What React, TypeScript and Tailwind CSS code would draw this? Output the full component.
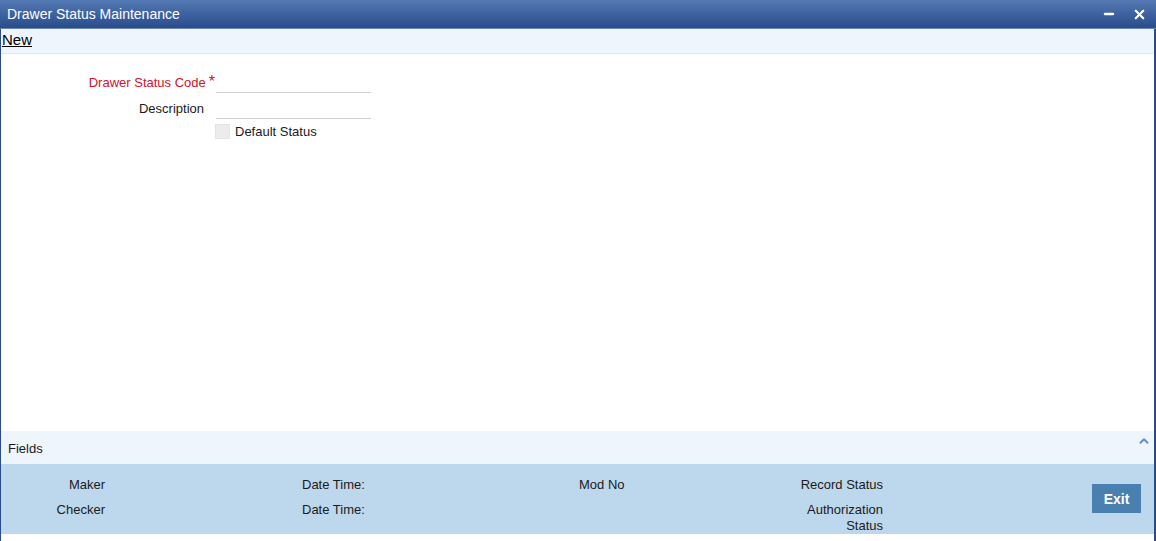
import { X, Minus, ChevronUp } from 'lucide-react';

const font = { fontFamily: '"Liberation Sans", Arial, sans-serif' };

export default function App() {
    return (
        <div className="w-[1156px] h-[541px] bg-white flex flex-col text-[13px] text-[#1a1a1a]" style={font}>
            {/* Title bar */}
            <div className="h-[29px] shrink-0 flex items-center justify-between pl-[7px] pr-[9px] bg-gradient-to-b from-[#5379b3] to-[#2a4c8c] border-b border-[#6a86ad]">
                <span className="text-white text-[14px] leading-none">Drawer Status Maintenance</span>
                <div className="flex items-center gap-[16px] text-white">
                    <Minus className="w-[14px] h-[14px]" strokeWidth={4} />
                    <X className="w-[15px] h-[15px]" strokeWidth={3.5} />
                </div>
            </div>

            <div className="flex-1 flex flex-col border-l border-[#2a4c8c] border-r-2 border-r-[#2a4c8c]">
                {/* Toolbar */}
                <div className="h-[25px] shrink-0 bg-[#eef5fd] border-b border-[#e2e6ea] flex items-center pl-[1px]">
                    <span className="underline text-[15px] text-black leading-none -mt-[3px]">New</span>
                </div>

                {/* Form */}
                <div className="flex-1 pt-[17px]">
                    <div className="flex items-end h-[22px]">
                        <div className="w-[214px] shrink-0 flex justify-end pb-[2px] text-[#d0112b] leading-[16px] whitespace-nowrap">
                            <span>Drawer Status Code</span>
                            <span className="ml-[3px] text-[16px] leading-[16px] -mt-[1px]">*</span>
                        </div>
                        <div className="w-[155px] shrink-0 h-[22px] border-b border-[#cfcfcf] ml-[1px]" />
                    </div>
                    <div className="flex items-end h-[22px] mt-[4px]">
                        <div className="w-[203px] shrink-0 text-right leading-[16px] pb-[2px] whitespace-nowrap">Description</div>
                        <div className="w-[155px] shrink-0 h-[22px] border-b border-[#cfcfcf] ml-[12px]" />
                    </div>
                    <div className="flex items-center mt-[5px] ml-[214px]">
                        <div className="w-[15px] h-[15px] shrink-0 bg-[#ececec] border border-[#e4e4e4]" />
                        <span className="ml-[5px] leading-none whitespace-nowrap">Default Status</span>
                    </div>
                </div>

                {/* Fields bar */}
                <div className="h-[33px] shrink-0 bg-[#eef5fd] flex items-center justify-between pl-[7px] pr-[3px]">
                    <span className="pt-[2px]">Fields</span>
                    <ChevronUp className="w-[14px] h-[14px] text-[#6a8fc2] -mt-[14px]" strokeWidth={3.5} />
                </div>

                {/* Audit area */}
                <div className="h-[70px] shrink-0 bg-[#bdd8ec] flex text-[13px] leading-[16px] whitespace-nowrap">
                    <div className="w-[104px] shrink-0 pt-[13px] flex flex-col items-end gap-[9px]">
                        <span>Maker</span>
                        <span>Checker</span>
                    </div>
                    <div className="w-[100px] shrink-0 ml-[197px] pt-[13px] flex flex-col gap-[9px]">
                        <span>Date Time:</span>
                        <span>Date Time:</span>
                    </div>
                    <div className="w-[60px] shrink-0 ml-[177px] pt-[13px]">
                        <span>Mod No</span>
                    </div>
                    <div className="w-[244px] shrink-0 pt-[13px] flex flex-col items-end text-right">
                        <span>Record Status</span>
                        <span className="mt-[9px]">Authorization</span>
                        <span>Status</span>
                    </div>
                    <div className="shrink-0 ml-[209px] pt-[20px]">
                        <button className="w-[49px] h-[29px] bg-[#4a80b0] text-white font-bold text-[14px]">Exit</button>
                    </div>
                </div>
                <div className="h-[7px] shrink-0 bg-white" />
            </div>
        </div>
    );
}
